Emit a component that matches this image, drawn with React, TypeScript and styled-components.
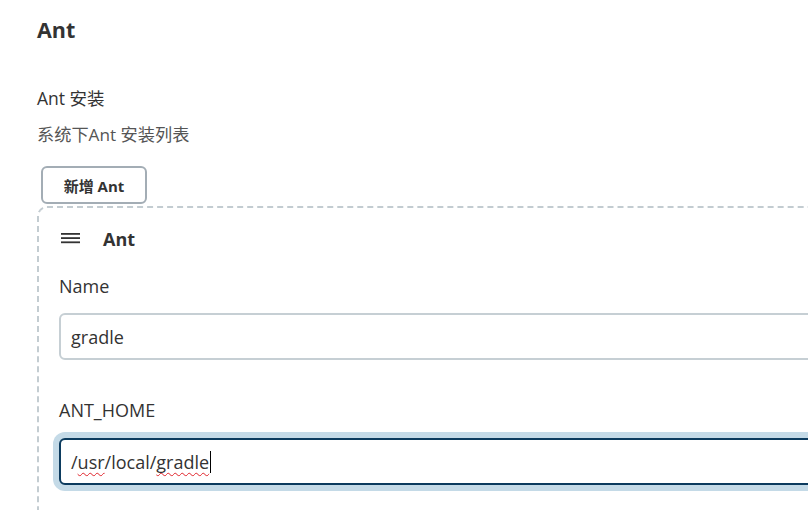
import React from "react";
import styled, { createGlobalStyle } from "styled-components";

const Global = createGlobalStyle`
  html, body {
    margin: 0;
    padding: 0;
    background: #ffffff;
    overflow: hidden;
  }
  body {
    font-family: "Open Sans", "Noto Sans CJK SC", sans-serif;
    color: #333333;
  }
`;

const Page = styled.div`
  width: 808px;
  height: 510px;
  overflow: hidden;
  box-sizing: border-box;
  padding: 16px 0 0 37px;
`;

const Title = styled.h2`
  margin: 0;
  font-size: 21.5px;
  font-weight: 700;
  line-height: 28px;
  color: #333;
`;

const SectionLabel = styled.div`
  margin-top: 42px;
  font-size: 17.5px;
  line-height: 24px;
  color: #333;
`;

const Description = styled.div`
  margin-top: 13px;
  font-size: 17.2px;
  line-height: 24px;
  color: #555;
`;

const AddButton = styled.button`
  margin: 19px 0 0 4px;
  width: 106px;
  height: 38px;
  box-sizing: border-box;
  border: 2px solid #a3adb5;
  border-radius: 6px;
  background: #fff;
  font-family: "Open Sans", "Noto Sans CJK SC", sans-serif;
  font-size: 15px;
  font-weight: 700;
  color: #333;
  padding: 0;
  display: block;
`;

const Chunk = styled.div`
  margin-top: 2px;
  width: 820px;
  box-sizing: border-box;
  border: 2px dashed #c3ccd1;
  border-right: none;
  border-bottom: none;
  border-top-left-radius: 10px;
  padding: 19px 0 0 20px;
  height: 320px;
`;

const ChunkHeader = styled.div`
  display: flex;
  align-items: center;
  gap: 22px;
  height: 24px;
  margin-left: 2px;
`;

const HeaderTitle = styled.span`
  font-size: 18px;
  font-weight: 700;
  color: #333;
`;

const FieldLabel = styled.div<{ $top: number }>`
  margin-top: ${(p) => p.$top}px;
  font-size: 18px;
  line-height: 24px;
  color: #333;
`;

const InputBox = styled.div<{ $focused?: boolean; $top: number }>`
  margin-top: ${(p) => p.$top}px;
  height: 47px;
  box-sizing: border-box;
  border: 2px solid ${(p) => (p.$focused ? "#0c3b5e" : "#c6cfd4")};
  border-radius: 6px;
  box-shadow: ${(p) => (p.$focused ? "0 0 0 6px #c4dae7" : "none")};
  display: flex;
  align-items: center;
  padding-left: 10px;
  font-size: 18px;
  color: #333;
  background: #fff;
`;

const Misspelled = styled.span`
  text-decoration: underline wavy #e0242b;
  text-decoration-thickness: 1px;
  text-underline-offset: 3px;
  text-decoration-skip-ink: none;
`;

const Caret = styled.span`
  display: inline-block;
  width: 1px;
  height: 22px;
  background: #000;
  margin-left: 1px;
`;

function MenuIcon() {
  return (
    <svg width="20" height="12" viewBox="0 0 20 12" aria-hidden="true">
      <rect x="0" y="0" width="19" height="1.8" fill="#333" />
      <rect x="0" y="4.2" width="19" height="1.8" fill="#333" />
      <rect x="0" y="8.4" width="19" height="1.8" fill="#333" />
    </svg>
  );
}

export default function App() {
  return (
    <>
      <Global />
      <Page>
        <Title>Ant</Title>
        <SectionLabel>Ant 安装</SectionLabel>
        <Description>系统下Ant 安装列表</Description>
        <AddButton>新增 Ant</AddButton>
        <Chunk>
          <ChunkHeader>
            <MenuIcon />
            <HeaderTitle>Ant</HeaderTitle>
          </ChunkHeader>
          <FieldLabel $top={23}>Name</FieldLabel>
          <InputBox $top={15}>gradle</InputBox>
          <FieldLabel $top={38}>ANT_HOME</FieldLabel>
          <InputBox $top={16} $focused>
            /<Misspelled>usr</Misspelled>/local/<Misspelled>gradle</Misspelled>
            <Caret />
          </InputBox>
        </Chunk>
      </Page>
    </>
  );
}
